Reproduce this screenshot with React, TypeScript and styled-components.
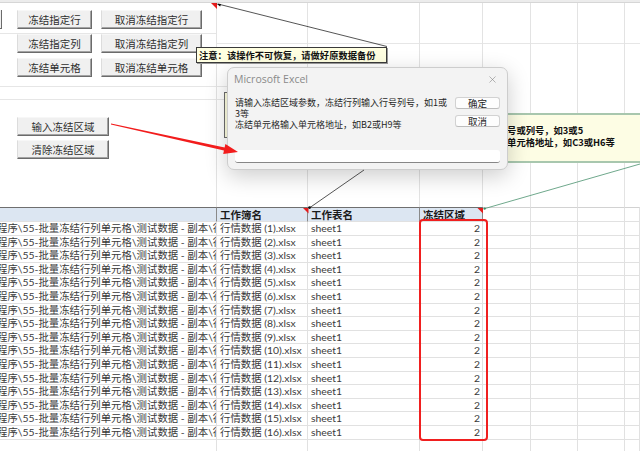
import styled, { createGlobalStyle } from 'styled-components';
import { X } from 'lucide-react';

const GlobalStyle = createGlobalStyle`
  html, body {
    margin: 0;
    padding: 0;
    background: #fff;
  }
  body {
    font-family: 'Noto Sans CJK SC', 'Noto Sans', sans-serif;
  }
`;

const PATH = '程序\\55-批量冻结行列单元格\\测试数据 - 副本\\行情数据';
const rows = Array.from({ length: 16 }, (_, i) => i + 1);

// faint sheet gridlines behind the form controls
const vLines = [216, 307, 419, 482, 530, 577, 624];
const hLines: [number, number, number][] = [
  [0, 33, 217],
  [217, 43, 423],
  [0, 86, 227],
  [0, 99, 227],
];
const gridBg = [
  ...vLines.map((x) => `linear-gradient(#e3e3e3, #e3e3e3) ${x}px 0 / 1px 100% no-repeat`),
  ...hLines.map(([x, y, w]) => `linear-gradient(#e6e6e6, #e6e6e6) ${x}px ${y}px / ${w}px 1px no-repeat`),
].join(', ');

function App() {
  return (
    <>
      <GlobalStyle />
      <Sheet>
        <TopArea>
          <TopStrip />
          <ButtonGrid>
            <LeftStub />
            <SheetButton $w={75} style={{ gridColumn: 3 }}>冻结指定行</SheetButton>
            <SheetButton $w={101} style={{ gridColumn: 5 }}>取消冻结指定行</SheetButton>
            <SheetButton $w={75} style={{ gridColumn: 3 }}>冻结指定列</SheetButton>
            <SheetButton $w={101} style={{ gridColumn: 5 }}>取消冻结指定列</SheetButton>
            <SheetButton $w={75} style={{ gridColumn: 3 }}>冻结单元格</SheetButton>
            <SheetButton $w={101} style={{ gridColumn: 5 }}>取消冻结单元格</SheetButton>
          </ButtonGrid>
          <ButtonStack>
            <SheetButton $w={92}>输入冻结区域</SheetButton>
            <SheetButton $w={92}>清除冻结区域</SheetButton>
          </ButtonStack>
        </TopArea>

        <Table>
          <Cell $head $tint />
          <Cell $head $tint>工作簿名</Cell>
          <Cell $head $tint>工作表名</Cell>
          <Cell $head $tint>冻结区域</Cell>
          <Cell $head />
          <Cell $head />
          <Cell $head />
          <Cell $head />
          {rows.map((n) => (
            <Row key={n}>
              <PathCell>{`${PATH} (${n}).xlsx`}</PathCell>
              <Cell>{`行情数据 (${n}).xlsx`}</Cell>
              <Cell>sheet1</Cell>
              <Cell $right>2</Cell>
              <Cell />
              <Cell />
              <Cell />
              <Cell />
            </Row>
          ))}
          <Row>
            <Cell />
            <Cell />
            <Cell />
            <Cell />
            <Cell />
            <Cell />
            <Cell />
            <Cell />
          </Row>
        </Table>

        <HiddenNote />
        <HintNote>
          冻结行列输入行号或列号，如3或5
          <br />
          冻结单元格输入单元格地址，如C3或H6等
        </HintNote>
        <WarningNote>注意：该操作不可恢复，请做好原数据备份</WarningNote>

        <Dialog>
          <TitleBar>
            <Title>Microsoft Excel</Title>
            <X size={11} strokeWidth={1.2} color="#7a7a7a" />
          </TitleBar>
          <DialogBody>
            <Message>
              请输入冻结区域参数，冻结行列输入行号列号，如1或
              <br />
              3等
              <br />
              冻结单元格输入单元格地址，如B2或H9等
            </Message>
            <DialogButtons>
              <DialogButton>确定</DialogButton>
              <DialogButton>取消</DialogButton>
            </DialogButtons>
          </DialogBody>
          <InputBox />
        </Dialog>

        <RedFrame />

        <Overlay width="640" height="451" viewBox="0 0 640 451">
          {/* comment indicators */}
          <polygon points="211,3 217,3 217,9" fill="#e41b1b" />
          <polygon points="303,208 308.5,208 308.5,213.5" fill="#e41b1b" />
          <polygon points="477.5,208 483,208 483,213.5" fill="#e41b1b" />
          {/* comment connectors */}
          <line x1="387" y1="46.5" x2="218" y2="4" stroke="#2a2a2a" strokeWidth="0.8" />
          <polygon points="216.5,3.7 221,3.9 220.2,6.4" fill="#111" />
          <line x1="364" y1="170" x2="310" y2="207.5" stroke="#2a2a2a" strokeWidth="0.8" />
          <circle cx="309.6" cy="207.6" r="1.4" fill="#111" />
          <line x1="640" y1="164" x2="485" y2="208.5" stroke="#5f9e7f" strokeWidth="0.9" />
          <circle cx="484.6" cy="208.6" r="1.2" fill="#3e8a63" />
          {/* red pointer arrow */}
          <polygon
            points="111.09,123.61 224.64,147.44 225.4,144.1 238,152 223.2,153.9 223.96,150.56 110.91,124.39"
            fill="#f21c1c"
          />
        </Overlay>
      </Sheet>
    </>
  );
}

const Sheet = styled.div`
  position: relative;
  width: 640px;
  height: 451px;
  overflow: hidden;
  background: #fff;
`;

const TopArea = styled.div`
  height: 207px;
  background: ${gridBg};
`;

const TopStrip = styled.div`
  height: 2px;
  background: #ececec;
  border-bottom: 1px solid #d6d6d6;
`;

const ButtonGrid = styled.div`
  display: grid;
  grid-template-columns: 2px 15px 75px 9px 101px;
  grid-auto-rows: 19px;
  row-gap: 5px;
  margin-top: 7px;
`;

const LeftStub = styled.div`
  grid-column: 1;
  box-sizing: border-box;
  background: #f0f0f0;
  border-right: 1px solid #6b6b6b;
  border-bottom: 1px solid #6b6b6b;
`;

const ButtonStack = styled.div`
  display: flex;
  flex-direction: column;
  gap: 4px;
  margin: 40px 0 0 17px;
`;

const SheetButton = styled.button<{ $w: number }>`
  width: ${(p) => p.$w}px;
  height: 19px;
  box-sizing: border-box;
  padding: 0;
  background: #f0f0f0;
  border: 1px solid;
  border-color: #f7f7f7 #6b6b6b #6b6b6b #dcdcdc;
  box-shadow: inset -1px -1px 0 #a3a3a3;
  font-family: 'Noto Sans CJK SC', sans-serif;
  font-size: 10.5px;
  line-height: 17px;
  color: #2e2e2e;
  white-space: nowrap;
`;

const Table = styled.div`
  display: grid;
  grid-template-columns: 217px 91px 112px 63px 48px 47px 47px 15px;
  grid-template-rows: 15px;
  grid-auto-rows: 13.6px;
`;

const Row = styled.div`
  display: contents;
`;

const Cell = styled.div<{ $head?: boolean; $tint?: boolean; $right?: boolean }>`
  box-sizing: border-box;
  min-width: 0;
  overflow: hidden;
  white-space: nowrap;
  padding: 0 ${(p) => (p.$right ? 2 : 0)}px 0 3px;
  background: ${(p) => (p.$tint ? '#dce6f2' : '#fff')};
  border-right: 1px solid ${(p) => (p.$tint ? '#8a8a8a' : '#e1e1e1')};
  border-bottom: 1px solid #e1e1e1;
  border-top: ${(p) => (p.$head ? `1px solid ${p.$tint ? '#6f6f6f' : '#d2d2d2'}` : 'none')};
  font-family: ${(p) => (p.$head ? "'Noto Sans CJK SC', sans-serif" : "Lato, 'Noto Sans CJK SC', sans-serif")};
  font-size: ${(p) => (p.$head ? '10.5px' : '10.4px')};
  font-weight: ${(p) => (p.$head ? 700 : 400)};
  line-height: ${(p) => (p.$head ? '13px' : '12.6px')};
  color: ${(p) => (p.$head ? '#1a1a1a' : '#3a3a3a')};
  text-align: ${(p) => (p.$right ? 'right' : 'left')};
`;

const PathCell = styled(Cell)`
  padding: 0;
  text-indent: -3px;
`;

const NoteBase = styled.div`
  position: absolute;
  box-sizing: border-box;
  background: #ffffe1;
  font-family: 'Noto Sans CJK SC', sans-serif;
  font-weight: 700;
  font-size: 9.3px;
  color: #111;
  white-space: nowrap;
`;

const WarningNote = styled(NoteBase)`
  left: 196px;
  top: 47px;
  width: 191px;
  height: 16px;
  padding-left: 2px;
  line-height: 14px;
  border: 1px solid #3a3a3a;
  box-shadow: 1px 1px 0 #9a9a9a;
`;

const HintNote = styled(NoteBase)`
  left: 436px;
  top: 113px;
  width: 240px;
  height: 50px;
  padding: 9px 0 0 4px;
  line-height: 12px;
  background: #fdfde4;
  border: 2px solid #a8c7ae;
`;

const HiddenNote = styled(NoteBase)`
  left: 224px;
  top: 92px;
  width: 160px;
  height: 46px;
  border: 1px solid #6d6d6d;
`;

const Dialog = styled.div`
  position: absolute;
  left: 227px;
  top: 67px;
  width: 281px;
  height: 103px;
  box-sizing: border-box;
  display: flex;
  flex-direction: column;
  padding: 0 7px 6px 7px;
  background: #f3f3f3;
  border: 1px solid #cdcdcd;
  border-radius: 7px;
  box-shadow: 0 6px 22px rgba(0, 0, 0, 0.2);
`;

const TitleBar = styled.div`
  height: 22px;
  display: flex;
  align-items: center;
  justify-content: space-between;
  padding-right: 2px;
`;

const Title = styled.span`
  margin-left: -1px;
  font-family: 'Open Sans', 'Noto Sans', sans-serif;
  font-size: 10.5px;
  color: #8a8a8a;
`;

const DialogBody = styled.div`
  display: flex;
  justify-content: space-between;
  padding-top: 7px;
`;

const Message = styled.div`
  font-size: 9px;
  line-height: 11px;
  color: #1f1f1f;
  white-space: nowrap;
`;

const DialogButtons = styled.div`
  display: flex;
  flex-direction: column;
  gap: 6px;
`;

const DialogButton = styled.button`
  width: 45px;
  height: 12px;
  box-sizing: border-box;
  padding: 0;
  background: #fdfdfd;
  border: 1px solid #d2d2d2;
  border-bottom-color: #bdbdbd;
  border-radius: 3px;
  font-family: 'Noto Sans CJK SC', sans-serif;
  font-size: 9.5px;
  line-height: 10px;
  color: #1f1f1f;
`;

const InputBox = styled.div`
  margin-top: auto;
  height: 13px;
  box-sizing: border-box;
  background: #fff;
  border-radius: 3px;
  border-bottom: 1px solid #878787;
`;

const RedFrame = styled.div`
  position: absolute;
  left: 419px;
  top: 219px;
  width: 69px;
  height: 222px;
  box-sizing: border-box;
  border: 2px solid #f01f1f;
  border-radius: 4px;
`;

const Overlay = styled.svg`
  position: absolute;
  left: 0;
  top: 0;
  pointer-events: none;
`;

export default App;
